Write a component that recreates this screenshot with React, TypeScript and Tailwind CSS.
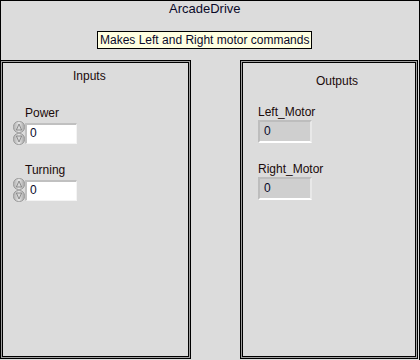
const font = { fontFamily: '"Liberation Sans", Arial, sans-serif' }

function Spinner() {
  return (
    <svg width="12" height="24" viewBox="0 0 12 24" className="shrink-0">
      <defs>
        <linearGradient id="spg" x1="0" y1="0" x2="1" y2="0">
          <stop offset="0" stopColor="#b0b0b0" />
          <stop offset="0.5" stopColor="#e6e6e6" />
          <stop offset="1" stopColor="#a4a4a4" />
        </linearGradient>
      </defs>
      <rect x="0.5" y="0.5" width="11" height="11" rx="5" fill="url(#spg)" stroke="#9a9a9a" />
      <rect x="0.5" y="12.5" width="11" height="11" rx="5" fill="url(#spg)" stroke="#9a9a9a" />
      <path d="M6 3 L8.6 9 L3.4 9 Z" fill="#d8d8d8" stroke="#787878" strokeWidth="0.8" />
      <path d="M6 21 L8.6 15 L3.4 15 Z" fill="#d8d8d8" stroke="#787878" strokeWidth="0.8" />
    </svg>
  )
}

function NumControl({ label, value, top }: { label: string; value: string; top: string }) {
  return (
    <div className={top}>
      <div className="ml-[22px] text-[12px] leading-[15px] text-[#1a0a0a]">{label}</div>
      <div className="flex items-center ml-[10px]">
        <Spinner />
        <div className="w-[52px] h-[21px] bg-white border-t-2 border-l-2 border-[#c0c0c0] border-b border-r border-b-[#f4f4f4] border-r-[#f4f4f4] pl-[3px] text-[12px] leading-[17px] text-[#0a0a2a]">
          {value}
        </div>
      </div>
    </div>
  )
}

function Indicator({ label, value, top }: { label: string; value: string; top: string }) {
  return (
    <div className={top}>
      <div className="ml-[15px] text-[12px] leading-[15px] text-[#1a0a0a]">{label}</div>
      <div className="ml-[15px] w-[54px] h-[23px] bg-[#cfcfcf] border-t-2 border-l-2 border-[#bdbdbd] border-b-2 border-r-2 border-b-white border-r-[#e8e8e8] pl-[4px] text-[12px] leading-[19px] text-[#0a0a2a]">
        {value}
      </div>
    </div>
  )
}

function Panel({ className, children }: { className: string; children: React.ReactNode }) {
  return (
    <div className={`border border-black bg-[#a0a0a0] p-px ${className}`}>
      <div className="h-full border border-black bg-[#dcdcdc]">{children}</div>
    </div>
  )
}

export default function App() {
  return (
    <div style={font} className="w-[420px] h-[360px] bg-[#dcdcdc] border-t border-r border-black flex flex-col overflow-hidden">
      {/* header */}
      <div className="h-[59px] border-l border-black flex flex-col items-start">
        <div className="ml-[168px] text-[13px] leading-[15px] text-[#0a0a2a]">ArcadeDrive</div>
        <div className="ml-[96px] mt-[15px] h-[18px] border border-black bg-[#ffffe1] px-[2px] text-[12px] leading-[16px] text-[#0a0a2a] whitespace-nowrap">
          Makes Left and Right motor commands
        </div>
      </div>

      <div className="flex h-[299px]">
        <Panel className="w-[191px]">
          <div className="mt-[6px] ml-[70px] text-[12px] leading-[15px] text-[#1a0a0a]">Inputs</div>
          <NumControl label="Power" value="0" top="mt-[22px]" />
          <NumControl label="Turning" value="0" top="mt-[18px]" />
        </Panel>
        <div className="w-[49px]" />
        <Panel className="w-[178px]">
          <div className="mt-[11px] ml-[73px] text-[12px] leading-[15px] text-[#1a0a0a]">Outputs</div>
          <Indicator label="Left_Motor" value="0" top="mt-[16px]" />
          <Indicator label="Right_Motor" value="0" top="mt-[19px]" />
        </Panel>
      </div>
    </div>
  )
}
